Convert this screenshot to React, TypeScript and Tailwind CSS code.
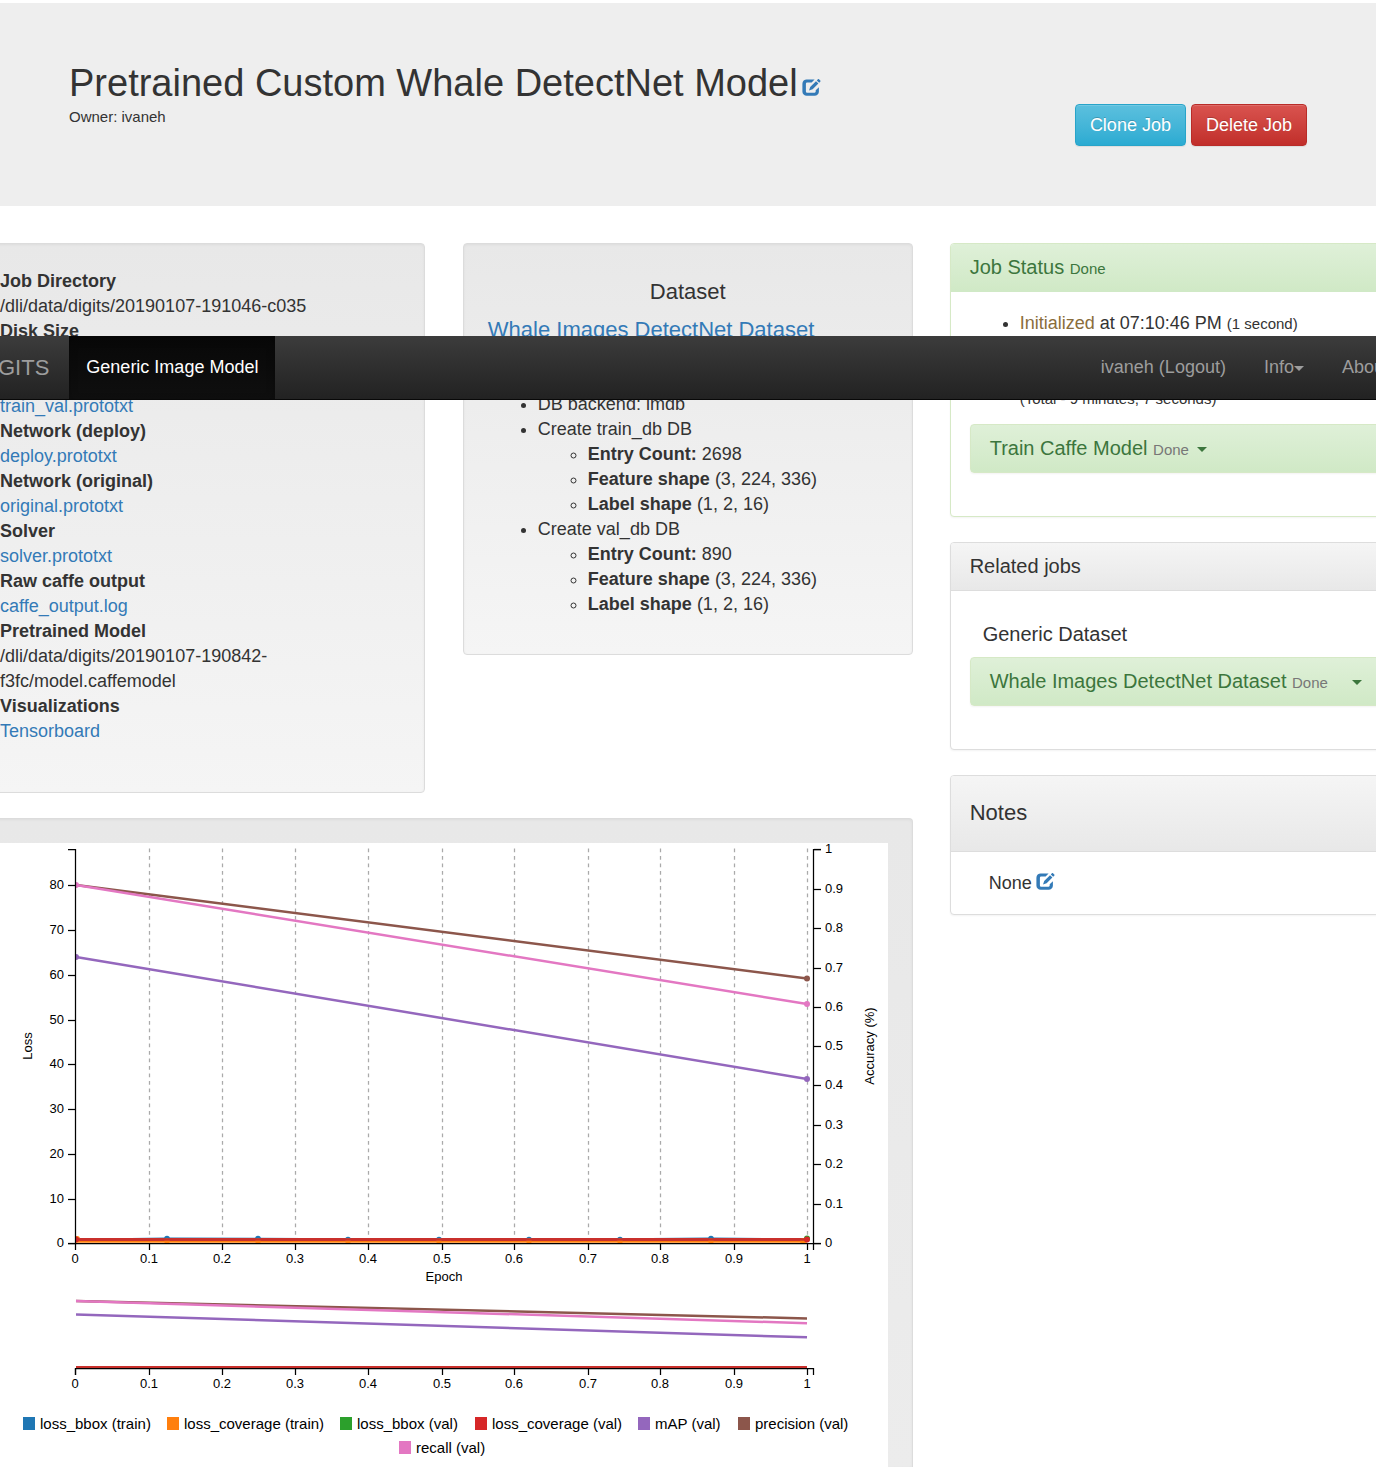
import React from "react";

function EditIcon({ className }: { className: string }) {
  return (
    <svg viewBox="0 0 19 17" className={className} aria-hidden="true">
      <path
        d="M12.6 0.4H4.8A4.3 4.3 0 0 0 0.4 4.7V12.4A4.3 4.3 0 0 0 4.8 16.8H12.6A4.3 4.3 0 0 0 16.9 12.4V8.2L13.7 11.2V12.6A1.1 1.1 0 0 1 12.6 13.7H5.1A1.2 1.2 0 0 1 3.9 12.5V4.8A1.2 1.2 0 0 1 5.1 3.6H9.6Z"
        fill="currentColor"
      />
      <path d="M7 11.6L8.2 7.9L14 2.2L16.4 4.6L10.6 10.3Z" fill="currentColor" />
      <path d="M14.8 1.4L16.1 0.1Q16.6 -0.2 17 0.2L18.5 1.7Q18.8 2.1 18.4 2.5L17.2 3.8Z" fill="currentColor" />
    </svg>
  );
}

function Caret({ className = "" }: { className?: string }) {
  return (
    <span
      className={`inline-block h-0 w-0 border-x-5 border-t-5 border-x-transparent border-t-current align-middle ${className}`}
    />
  );
}

const link = "text-[#337ab7] hover:underline";

const FILES: { term: string; value: string; href?: string }[] = [
  { term: "Network (deploy)", value: "deploy.prototxt", href: "#deploy" },
  { term: "Network (original)", value: "original.prototxt", href: "#original" },
  { term: "Solver", value: "solver.prototxt", href: "#solver" },
  { term: "Raw caffe output", value: "caffe_output.log", href: "#log" },
  { term: "Pretrained Model", value: "/dli/data/digits/20190107-190842-f3fc/model.caffemodel" },
  { term: "Visualizations", value: "Tensorboard", href: "#tensorboard" },
];

const DATABASES = [
  { name: "Create train_db DB", count: "2698" },
  { name: "Create val_db DB", count: "890" },
];

const wellBox =
  "border border-[#dcdcdc] bg-linear-to-b from-[#e8e8e8] shadow-[inset_0_1px_3px_rgba(0,0,0,0.05)]";

function Hero() {
  return (
    <header className="mt-[3px] flex justify-between bg-[#eeeeee] px-[69px] pb-[60px]">
      <div className="pt-[59px] pb-4">
        <h1 className="flex items-baseline text-[38px] leading-[42px]">
          Pretrained Custom Whale DetectNet Model
          <a href="#rename" aria-label="Edit name" className="ml-1 text-[#337ab7]">
            <EditIcon className="h-[17px] w-[19px]" />
          </a>
        </h1>
        <p className="text-[15px] leading-[26px]">Owner: ivaneh</p>
      </div>
      <div className="flex items-start gap-[5px] pt-[101px]">
        <button className="rounded-[4px] border border-[#28a4c9] bg-linear-to-b from-[#5bc0de] to-[#2aabd2] px-[14px] py-2 text-[18px] leading-6 text-white shadow-[inset_0_1px_0_rgba(255,255,255,0.15),0_1px_1px_rgba(0,0,0,0.075)] [text-shadow:0_-1px_0_rgba(0,0,0,0.2)]">
          Clone Job
        </button>
        <button className="rounded-[4px] border border-[#b92c28] bg-linear-to-b from-[#d9534f] to-[#c12e2a] px-[14px] py-2 text-[18px] leading-6 text-white shadow-[inset_0_1px_0_rgba(255,255,255,0.15),0_1px_1px_rgba(0,0,0,0.075)] [text-shadow:0_-1px_0_rgba(0,0,0,0.2)]">
          Delete Job
        </button>
      </div>
    </header>
  );
}

function NavBar() {
  return (
    <nav className="absolute inset-x-0 top-[336px] z-10 flex h-16 overflow-hidden border-b border-[#080808] bg-linear-to-b from-[#3c3c3c] to-[#222222] text-[18px] text-[#9d9d9d]">
      <a href="#home" className="-ml-6 flex items-center pr-5 text-[22px]">
        DIGITS
      </a>
      <a
        href="#model"
        className="flex items-center bg-linear-to-b from-[#080808] to-[#0f0f0f] px-[17px] text-white shadow-[inset_0_3px_9px_rgba(0,0,0,0.25)]"
      >
        Generic Image Model
      </a>
      <div className="-mr-8 ml-auto flex items-center">
        <a href="#logout" className="px-[19px]">ivaneh (Logout)</a>
        <a href="#info" className="px-[19px]">
          Info
          <Caret />
        </a>
        <a href="#about" className="px-[19px]">About</a>
      </div>
    </nav>
  );
}

function JobDetails() {
  return (
    <section className={`${wellBox} rounded-[4px] to-[#f5f5f5] px-6 pt-[25px] pb-12`}>
      <dl>
        <dt className="font-bold">Job Directory</dt>
        <dd>/dli/data/digits/20190107-191046-c035</dd>
        <dt className="pb-[50px] font-bold">Disk Size</dt>
        <dd>
          <a href="#train_val" className={link}>train_val.prototxt</a>
        </dd>
        {FILES.map((f) => (
          <React.Fragment key={f.term}>
            <dt className="font-bold">{f.term}</dt>
            <dd className="pr-24">{f.href ? <a href={f.href} className={link}>{f.value}</a> : f.value}</dd>
          </React.Fragment>
        ))}
      </dl>
    </section>
  );
}

function DatasetWell() {
  return (
    <section className={`${wellBox} self-start rounded-[4px] to-[#f5f5f5] px-6 pt-[35px] pb-[37px]`}>
      <h2 className="text-center text-[22px] leading-[25px]">Dataset</h2>
      <h3 className="mt-[13px] text-[22px] leading-[25px]">
        <a href="#dataset" className={link}>Whale Images DetectNet Dataset</a>
      </h3>
      <ul className="mt-[50px] list-disc pl-[50px]">
        <li>DB backend: lmdb</li>
        {DATABASES.map((db) => (
          <li key={db.name}>
            {db.name}
            <ul className="list-[circle] pl-[50px]">
              <li><b>Entry Count:</b> {db.count}</li>
              <li><b>Feature shape</b> (3, 224, 336)</li>
              <li><b>Label shape</b> (1, 2, 16)</li>
            </ul>
          </li>
        ))}
      </ul>
    </section>
  );
}

const X_TICKS = [75, 149, 222, 295, 368, 442, 514, 588, 660, 734, 807];
const X_LABELS = ["0", "0.1", "0.2", "0.3", "0.4", "0.5", "0.6", "0.7", "0.8", "0.9", "1"];
const LEFT_TICKS = [400, 356, 311, 266, 221, 177, 132, 87, 42];
const RIGHT_TICKS = [400, 361, 321, 282, 242, 203, 164, 125, 85, 46, 6];
const TRAIN_X = [167, 258, 348, 439, 529, 620, 711];

const LEGEND = [
  { label: "loss_bbox (train)", color: "#1f77b4", x: 23, y: 575 },
  { label: "loss_coverage (train)", color: "#ff7f0e", x: 167, y: 575 },
  { label: "loss_bbox (val)", color: "#2ca02c", x: 340, y: 575 },
  { label: "loss_coverage (val)", color: "#d62728", x: 475, y: 575 },
  { label: "mAP (val)", color: "#9467bd", x: 638, y: 575 },
  { label: "precision (val)", color: "#8c564b", x: 738, y: 575 },
  { label: "recall (val)", color: "#e377c2", x: 399, y: 599 },
];

function LossChart() {
  return (
    <svg width="888" height="624" className="block max-w-none text-[13px]" role="img" aria-label="Loss and accuracy per epoch">
      <defs>
        <clipPath id="plot">
          <rect x="75.5" y="0" width="740" height="401" />
        </clipPath>
      </defs>
      <g stroke="#aaaaaa" strokeWidth="1.25" strokeDasharray="3.75 3.75">
        {X_TICKS.slice(1).map((x) => <path key={x} d={`M${x + 0.5} 5.5V400`} />)}
      </g>
      <g clipPath="url(#plot)">
        <g fill="none" strokeWidth="2.5">
          <path d="M76 397L167 395.8L258 396L348 396.5H620L711 395.8L807 396.5" stroke="#1f77b4" />
          <path d="M76 398.8H807" stroke="#ff7f0e" strokeWidth="2" />
          <path d="M76 396.4H807" stroke="#c9302c" strokeWidth="3" />
          <path d="M76 114L807 236" stroke="#9467bd" />
          <path d="M76 42L807 135.4" stroke="#8c564b" />
          <path d="M76 42L807 161" stroke="#e377c2" />
        </g>
        {TRAIN_X.map((x, i) => (
          <g key={x}>
            <circle cx={x} cy={i < 2 || i === 6 ? 395.5 : 396.5} r="2.8" fill="#1f77b4" />
            <circle cx={x} cy="398" r="2.8" fill="#ff7f0e" />
          </g>
        ))}
        <circle cx="77" cy="396" r="3" fill="#ff7f0e" />
        <circle cx="803" cy="398" r="3" fill="#ff7f0e" />
        <circle cx="807" cy="395.6" r="3" fill="#2ca02c" />
        <path d="M76 396.4H807" stroke="#c9302c" strokeWidth="2.5" />
        <circle cx="76" cy="396.4" r="3" fill="#d62728" />
        <circle cx="807" cy="396.4" r="3" fill="#d62728" />
        <circle cx="76" cy="114" r="3" fill="#9467bd" />
        <circle cx="807" cy="236" r="3" fill="#9467bd" />
        <circle cx="807" cy="135.4" r="3" fill="#8c564b" />
        <circle cx="76" cy="42" r="3" fill="#e377c2" />
        <circle cx="807" cy="161" r="3" fill="#e377c2" />
      </g>
      <g fill="none" strokeWidth="2.5">
        <path d="M76 471.5L807 494.3" stroke="#9467bd" />
        <path d="M76 458L807 475.4" stroke="#8c564b" />
        <path d="M76 458L807 480.2" stroke="#e377c2" />
        <path d="M76 524H807" stroke="#c9302c" strokeWidth="2" />
      </g>
      <g fill="none" strokeWidth="1.25" stroke="#000000">
        <path d="M68 6.5H75.5V400.5H68" />
        <path d="M821 6.5H813.5V400.5H821" />
        <path d="M75.5 400.5H813.5V407" />
        <path d="M75.5 532V525.5H813.5V532" />
        {LEFT_TICKS.map((y) => <path key={y} d={`M68 ${y + 0.5}H76`} />)}
        {RIGHT_TICKS.map((y) => <path key={y} d={`M814 ${y + 0.5}H821`} />)}
        {X_TICKS.map((x) => <path key={x} d={`M${x + 0.5} 400.5V407M${x + 0.5} 525.5V532`} />)}
      </g>
      <g fill="#000000">
        {LEFT_TICKS.map((y, i) => <text key={y} x="64" y={y + 4} textAnchor="end">{i * 10}</text>)}
        {RIGHT_TICKS.map((y, i) => <text key={y} x="825" y={y + 4}>{X_LABELS[i]}</text>)}
        {X_TICKS.map((x, i) => (
          <g key={x} textAnchor="middle">
            <text x={x} y="420">{X_LABELS[i]}</text>
            <text x={x} y="545">{X_LABELS[i]}</text>
          </g>
        ))}
        <text x="444" y="438" textAnchor="middle">Epoch</text>
        <text transform="translate(32 203) rotate(-90)" textAnchor="middle">Loss</text>
        <text transform="translate(874 203) rotate(-90)" textAnchor="middle">Accuracy (%)</text>
      </g>
      {LEGEND.map((l) => (
        <g key={l.label} className="text-[15px]">
          <rect x={l.x} y={l.y - 1} width="12" height="13" fill={l.color} />
          <text x={l.x + 17} y={l.y + 11} fill="#000000">{l.label}</text>
        </g>
      ))}
    </svg>
  );
}

function Panel({ title, children, success = false, big = false }: { title: React.ReactNode; children: React.ReactNode; success?: boolean; big?: boolean }) {
  const border = success ? "border-[#d6e9c6]" : "border-[#dddddd]";
  const head = success
    ? "from-[#dff0d8] to-[#d0e9c6] text-[#3c763d] border-[#d0e9c6]"
    : "from-[#f5f5f5] to-[#e8e8e8] border-[#dddddd]";
  const size = big ? "pt-6 pb-[26px] text-[22px] leading-[25px]" : "py-3 text-[20px] leading-[23px]";
  return (
    <section className={`rounded-[4px] border bg-white shadow-[0_1px_2px_rgba(0,0,0,0.05)] ${border}`}>
      <h2 className={`rounded-t-[3px] border-b bg-linear-to-b px-[19px] ${head} ${size}`}>{title}</h2>
      <div className="px-[19px] pt-[19px] pb-[18px]">{children}</div>
    </section>
  );
}

function TaskBar({ name, caretGap }: { name: string; caretGap: string }) {
  return (
    <h3 className="mb-[25px] rounded-[4px] border border-[#d6e9c6] bg-linear-to-b from-[#dff0d8] to-[#d0e9c6] px-[19px] py-3 text-[20px] leading-[23px] whitespace-nowrap text-[#3c763d] shadow-[0_1px_2px_rgba(0,0,0,0.05)]">
      <a href="#task">{name}</a> <small className="text-[15px] leading-none text-[#777777]">Done</small>
      <Caret className={caretGap} />
    </h3>
  );
}

export default function App() {
  return (
    <div
      className="relative flow-root overflow-x-clip bg-white text-[18px] leading-[25px] text-[#333333]"
      style={{ fontFamily: '"Liberation Sans", Arial, sans-serif' }}
    >
      <Hero />
      <NavBar />
      <main className="mt-[37px] -mr-6 -ml-[25px] grid grid-cols-3 gap-x-[37px]">
        <div className="col-span-2 grid grid-cols-2 gap-x-[38px] gap-y-[25px]">
          <JobDetails />
          <DatasetWell />
          <section className={`${wellBox} col-span-2 rounded-t-[4px] border-b-0 to-[#ececec] px-6 pt-6`}>
            <div className="overflow-hidden bg-white">
              <LossChart />
            </div>
          </section>
        </div>
        <aside className="flex flex-col gap-[25px]">
          <Panel success title={<>Job Status <small className="text-[15px] leading-none">Done</small></>}>
            <ul className="list-disc pl-[50px]">
              <li>
                <span className="text-[#8a6d3b]">Initialized</span> at 07:10:46 PM{" "}
                <small className="text-[15px] leading-none">(1 second)</small>
              </li>
            </ul>
            <p className="mt-[50px] mb-[13px] pl-[50px] text-[15px]">(Total - 9 minutes, 7 seconds)</p>
            <TaskBar name="Train Caffe Model" caretGap="ml-2" />
          </Panel>
          <Panel title="Related jobs">
            <h3 className="mt-[13px] mb-3 pl-[13px] text-[20px] leading-[22px]">Generic Dataset</h3>
            <TaskBar name="Whale Images DetectNet Dataset" caretGap="ml-6" />
          </Panel>
          <Panel big title="Notes">
            <p className="flex items-center gap-1 pl-[19px]">
              None
              <a href="#notes" aria-label="Edit notes" className="text-[#337ab7]">
                <EditIcon className="mb-1 h-[17px] w-[19px]" />
              </a>
            </p>
          </Panel>
        </aside>
      </main>
    </div>
  );
}
